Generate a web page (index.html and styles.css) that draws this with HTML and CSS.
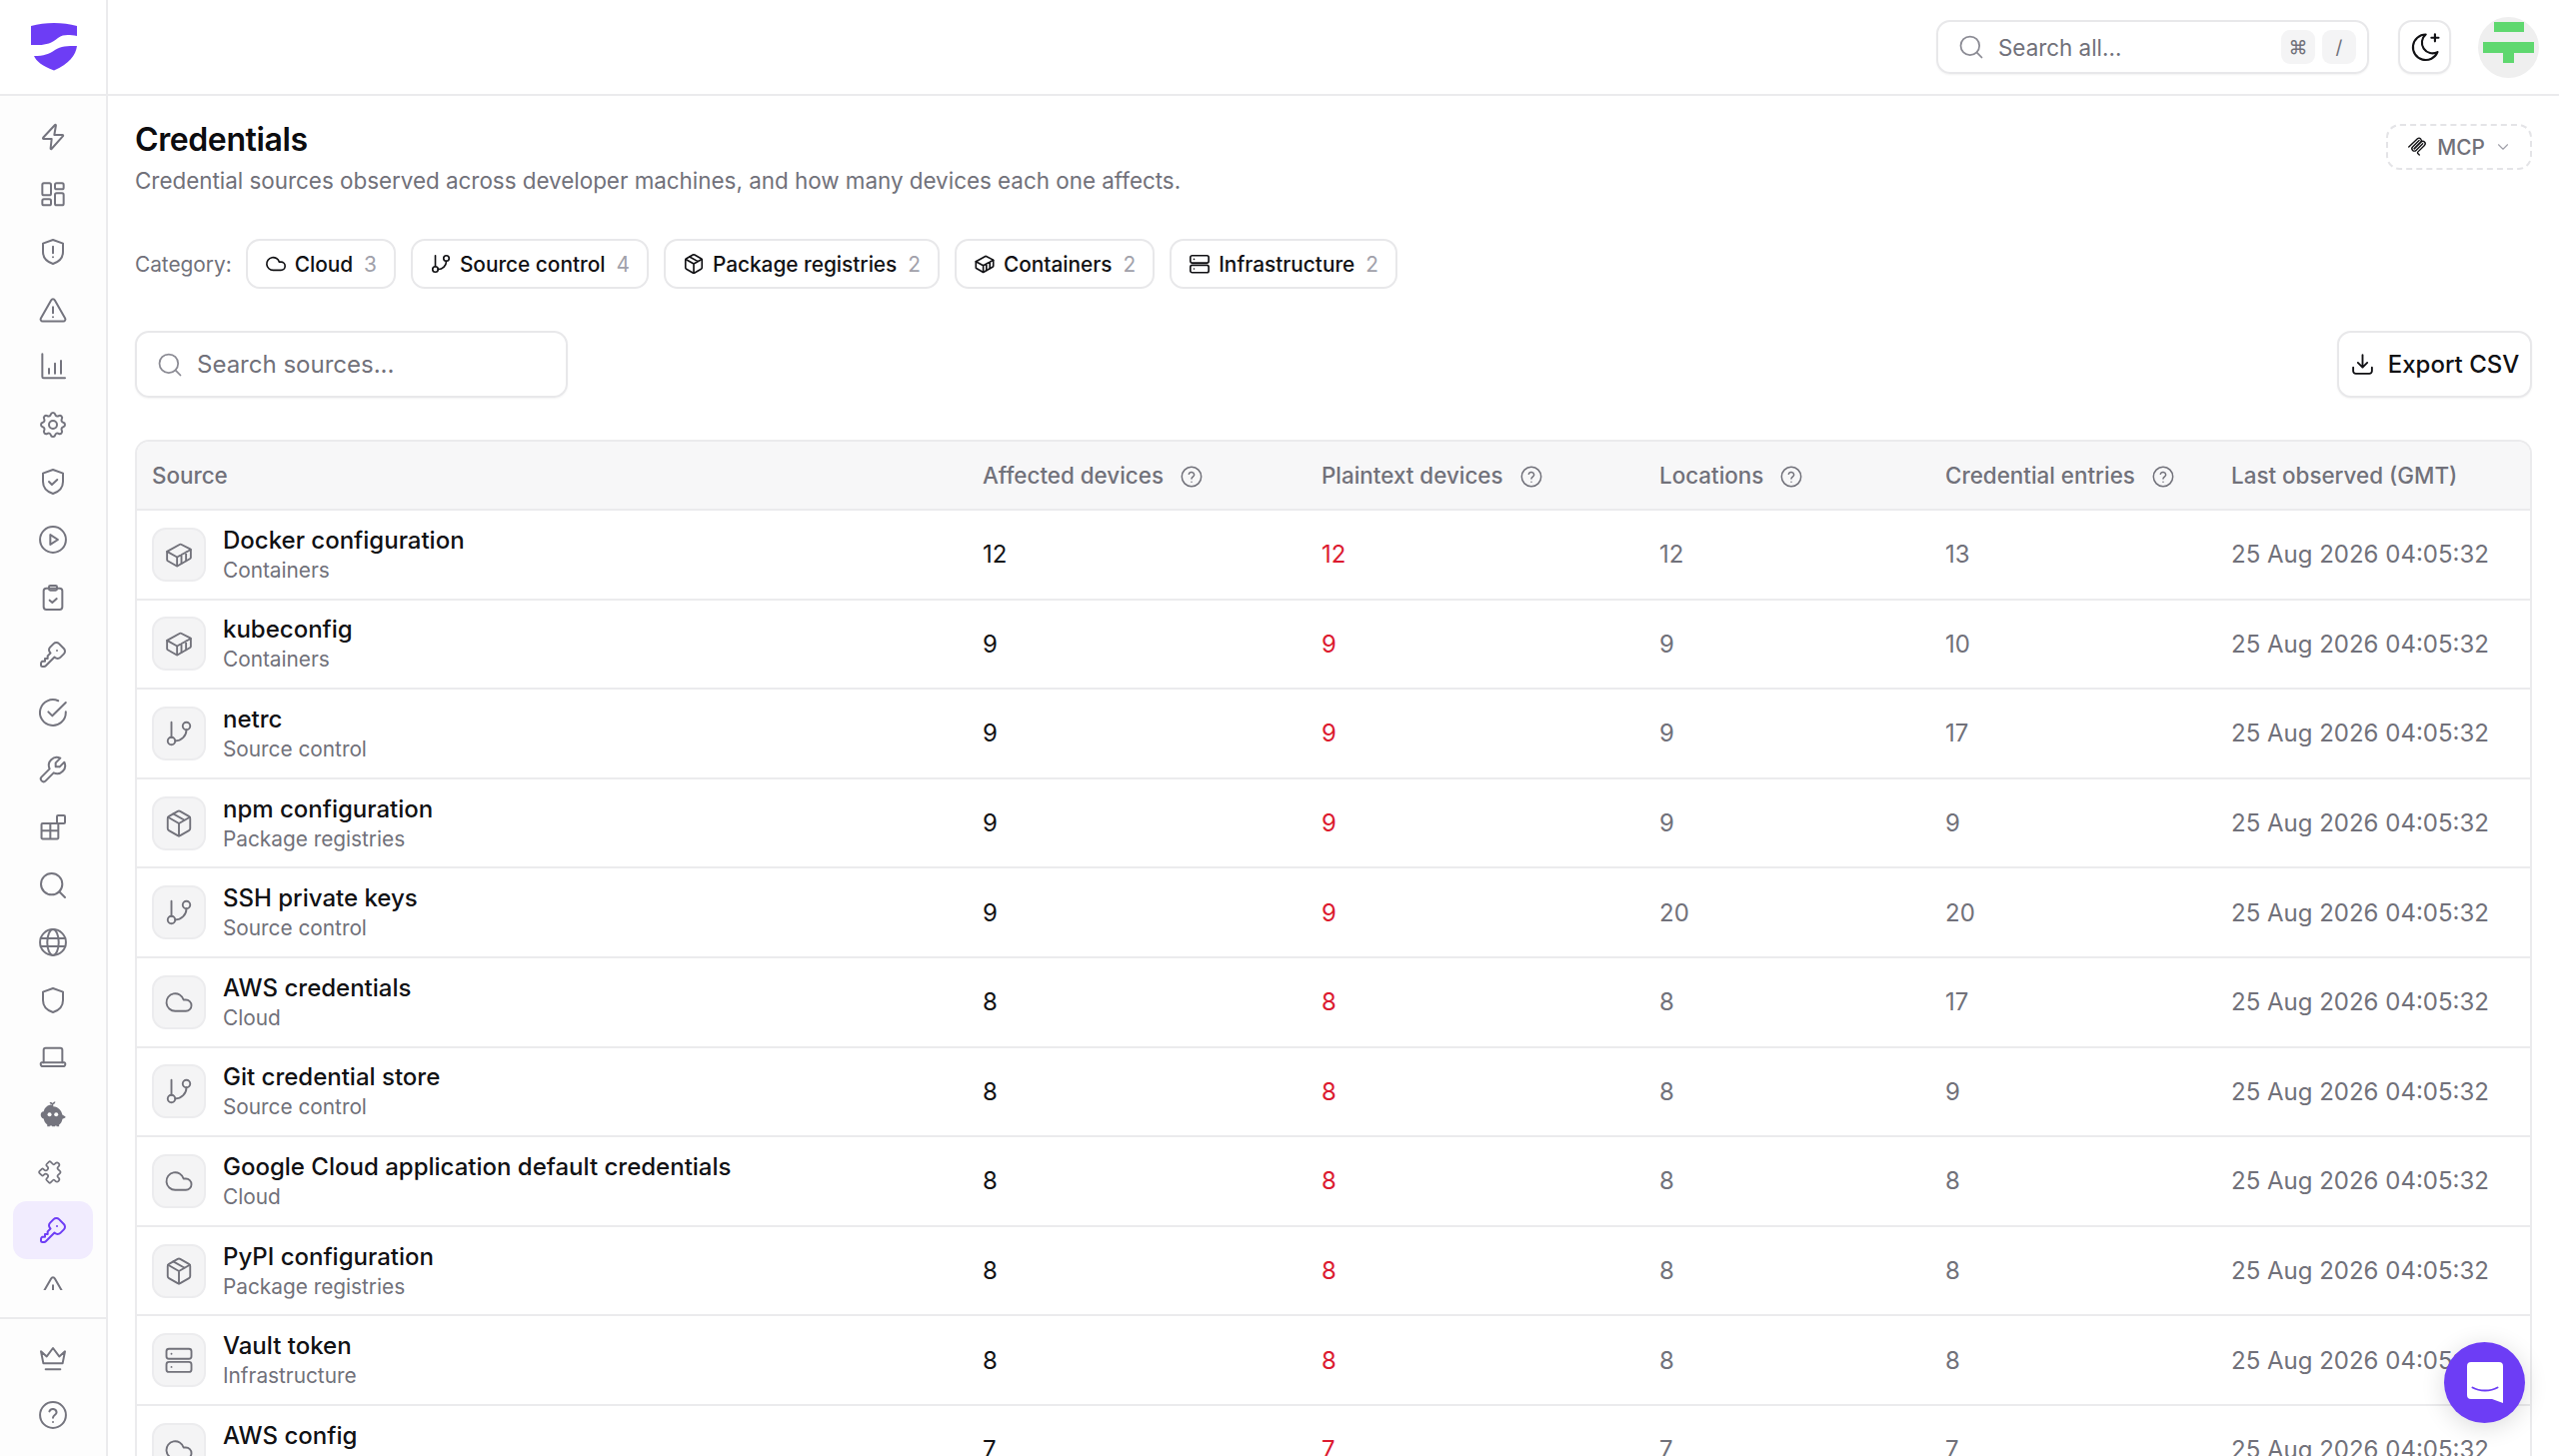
FILE: index.html
```html
<!DOCTYPE html>
<html lang="en">
<head>
<meta charset="UTF-8" />
<meta name="viewport" content="width=device-width, initial-scale=1" />
<title>Credentials</title>
<link rel="stylesheet" href="styles.css">
</head>
<body>

<!-- icon sprite -->
<svg class="sprite" aria-hidden="true">
  <symbol id="i-zap" viewBox="0 0 24 24"><path d="M13.5 3 4.6 12.6c-.3.4-.1.9.4.9H11l-.8 7.2c0 .4.4.6.7.3l8.6-9.6c.3-.4.1-.9-.4-.9H13l1.2-7.1c.1-.5-.4-.7-.7-.4z"/></symbol>
  <symbol id="i-dash" viewBox="0 0 24 24"><rect x="4" y="4" width="6.5" height="9" rx="1.2"/><rect x="4" y="16" width="6.5" height="4.5" rx="1.2"/><rect x="13.5" y="4" width="6.5" height="4.5" rx="1.2"/><rect x="13.5" y="11.5" width="6.5" height="9" rx="1.2"/></symbol>
  <symbol id="i-shield-alert" viewBox="0 0 24 24"><path d="M12 3l7.5 2.7v6.3c0 4.5-3.2 7.6-7.5 9-4.3-1.4-7.5-4.5-7.5-9V5.700z"/><path d="M12 8v5M12 16v.01"/></symbol>
  <symbol id="i-alert" viewBox="0 0 24 24"><path d="M10.6 4.800 2.900 18.300A1.600 1.600 0 0 0 4.300 20.700h15.400a1.600 1.600 0 0 0 1.400-2.400L13.400 4.800a1.600 1.600 0 0 0-2.800 0z"/><path d="M12 10v4.500M12 17.500v.01"/></symbol>
  <symbol id="i-chart" viewBox="0 0 24 24"><path d="M4 2.500V19.500a1 1 0 0 0 1 1h16"/><path d="M9 17v-3.500M13.500 17V9.500M18 17V7.500"/></symbol>
  <symbol id="i-gear" viewBox="0 0 24 24"><path d="M10.325 4.317c.426-1.756 2.924-1.756 3.350 0a1.724 1.724 0 0 0 2.573 1.066c1.543-.94 3.310.826 2.370 2.370a1.724 1.724 0 0 0 1.065 2.572c1.756.426 1.756 2.924 0 3.350a1.724 1.724 0 0 0-1.066 2.573c.94 1.543-.826 3.310-2.370 2.370a1.724 1.724 0 0 0-2.572 1.065c-.426 1.756-2.924 1.756-3.350 0a1.724 1.724 0 0 0-2.573-1.066c-1.543.94-3.310-.826-2.370-2.370a1.724 1.724 0 0 0-1.065-2.572c-1.756-.426-1.756-2.924 0-3.350a1.724 1.724 0 0 0 1.066-2.573c-.94-1.543.826-3.310 2.370-2.370 1 .608 2.296.07 2.572-1.065z"/><circle cx="12" cy="12" r="3"/></symbol>
  <symbol id="i-shield-check" viewBox="0 0 24 24"><path d="M12 3l7.500 2.700v6.300c0 4.500-3.200 7.600-7.500 9-4.300-1.400-7.500-4.500-7.500-9V5.700z"/><path d="M9 12l2.200 2.200L15.200 10.500"/></symbol>
  <symbol id="i-play" viewBox="0 0 24 24"><circle cx="12" cy="12" r="9.700"/><path d="M10 8.300v7.400l5.700-3.700z"/></symbol>
  <symbol id="i-clip" viewBox="0 0 24 24"><rect x="5" y="5" width="14" height="16" rx="2"/><rect x="9" y="3" width="6" height="3.500" rx="1"/><path d="M9.500 14l2 1.800 3.300-3"/></symbol>
  <symbol id="i-key" viewBox="0 0 24 24"><path d="M16.555 3.843l3.602 3.602a2.877 2.877 0 0 1 0 4.069l-2.643 2.643a2.877 2.877 0 0 1-4.069 0l-.301-.301l-6.558 6.558a2 2 0 0 1-1.239.578l-.175.008h-1.172a1 1 0 0 1-.993-.883l-.007-.117v-1.172a2 2 0 0 1 .467-1.284l.119-.13l.414-.414h2v-2h2v-2l2.144-2.144l-.301-.301a2.877 2.877 0 0 1 0-4.069l2.643-2.643a2.877 2.877 0 0 1 4.069 0z" transform="rotate(0)"/><path d="M15 9h.01"/></symbol>
  <symbol id="i-check-circle" viewBox="0 0 24 24"><path d="M21.600 11.500V12a9.700 9.700 0 1 1-5.700-8.800"/><path d="M8.500 11.500l3 3L21.600 4.500"/></symbol>
  <symbol id="i-wrench" viewBox="0 0 24 24"><g transform="translate(24 0) scale(-1 1)"><path d="M7 10h3V7L6.500 3.500a6 6 0 0 1 8 8l6 6a2 2 0 0 1-3 3l-6-6a6 6 0 0 1-8-8L7 10"/></g></symbol>
  <symbol id="i-apps" viewBox="0 0 24 24"><rect x="15" y="3" width="6" height="6" rx=".8"/><path d="M4.200 9H10v5.500h6V19.800a.8.8 0 0 1-.8.8H4.200a.8.8 0 0 1-.8-.8V9.800a.8.8 0 0 1 .8-.8zM3.400 14.500H10M10 14.500v6M10 9h5.200a.8.8 0 0 1 .8.8v4.700"/></symbol>
  <symbol id="i-search" viewBox="0 0 24 24"><circle cx="11" cy="11" r="8"/><path d="M21 21l-4.300-4.300"/></symbol>
  <symbol id="i-globe" viewBox="0 0 24 24"><circle cx="12" cy="12" r="9.700"/><ellipse cx="12" cy="12" rx="4.300" ry="9.700"/><path d="M2.800 9h18.400M2.800 15h18.400"/></symbol>
  <symbol id="i-shield" viewBox="0 0 24 24"><path d="M12 3l7.500 2.700v6.300c0 4.500-3.200 7.600-7.500 9-4.300-1.400-7.500-4.500-7.500-9V5.700z"/></symbol>
  <symbol id="i-laptop" viewBox="0 0 24 24"><path d="M5 16V6.500A1.500 1.500 0 0 1 6.500 5h11A1.500 1.500 0 0 1 19 6.500V16"/><path d="M3.500 16h17a.7.7 0 0 1 .7.7v.6a1.500 1.500 0 0 1-1.500 1.500H4.300a1.500 1.500 0 0 1-1.500-1.500v-.6a.7.7 0 0 1 .7-.7z"/></symbol>
  <symbol id="i-puzzle" viewBox="0 0 24 24"><g transform="rotate(45 12 12) translate(1.800 1.800) scale(.85)"><path d="M4 7h3a1 1 0 0 0 1-1v-1a2 2 0 0 1 4 0v1a1 1 0 0 0 1 1h3a1 1 0 0 1 1 1v3a1 1 0 0 0 1 1h1a2 2 0 0 1 0 4h-1a1 1 0 0 0-1 1v3a1 1 0 0 1-1 1h-3a1 1 0 0 1-1-1v-1a2 2 0 0 0-4 0v1a1 1 0 0 1-1 1H4a1 1 0 0 1-1-1v-3a1 1 0 0 1 1-1h1a2 2 0 0 0 0-4H4a1 1 0 0 1-1-1V8a1 1 0 0 1 1-1"/></g></symbol>
  <symbol id="i-crown" viewBox="0 0 24 24"><path d="M3 7l4.300 3.800L12 4.500l4.700 6.300L21 7l-1.800 9H4.800z"/><path d="M6.500 20.500h11"/></symbol>
  <symbol id="i-help" viewBox="0 0 24 24"><circle cx="12" cy="12" r="9.700"/><path d="M9.300 9.300a2.800 2.800 0 0 1 5.400 .7c0 1.900-2.700 2.200-2.700 4"/><path d="M12 17.200v.01"/></symbol>
  <symbol id="i-cloud" viewBox="0 0 24 24"><path d="M17.500 19H9a7 7 0 1 1 6.710-9h1.790a4.500 4.500 0 1 1 0 9z"/></symbol>
  <symbol id="i-branch" viewBox="0 0 24 24"><path d="M6 3v12"/><circle cx="6" cy="18" r="3"/><circle cx="18" cy="6" r="3"/><path d="M18 9a9 9 0 0 1-9 9"/></symbol>
  <symbol id="i-package" viewBox="0 0 24 24"><path d="M21 8a2 2 0 0 0-1-1.730l-7-4a2 2 0 0 0-2 0l-7 4A2 2 0 0 0 3 8v8a2 2 0 0 0 1 1.730l7 4a2 2 0 0 0 2 0l7-4A2 2 0 0 0 21 16z"/><path d="M12 22V12M3.300 7l8.700 5 8.700-5M7.500 4.270l9 5.150"/></symbol>
  <symbol id="i-container" viewBox="0 0 24 24"><path d="M2.500 9.500 12.800 3.800a1 1 0 0 1 .9 0l7.300 3.700a1 1 0 0 1 .5.9v6a1 1 0 0 1-.5.8l-10 5.800a1 1 0 0 1-1 0l-7-4a1 1 0 0 1-.5-.9z"/><path d="M2.500 9.500l8 4.500L21.500 8M10.500 14v7M14 12.200v6.800M17.700 10v7"/></symbol>
  <symbol id="i-server" viewBox="0 0 24 24"><rect x="2" y="3" width="20" height="8" rx="2"/><rect x="2" y="13.500" width="20" height="8" rx="2"/><path d="M6 7h.01M6 17.500h.01"/></symbol>
  <symbol id="i-download" viewBox="0 0 24 24"><path d="M12 3v12M7.500 10.500 12 15l4.500-4.500"/><path d="M3 15v3.500A2.500 2.500 0 0 0 5.500 21h13a2.500 2.500 0 0 0 2.500-2.500V15"/></symbol>
  <symbol id="i-moon" viewBox="0 0 24 24"><path d="M12.500 3.200a9 9 0 1 0 8.300 12.400 7.500 7.500 0 0 1-8.300-12.400z"/><path d="M19 3v5M16.500 5.500h5"/></symbol>
  <symbol id="i-mcp" viewBox="0 0 24 24"><path d="M3 12 12.500 3a2.600 2.600 0 0 1 3.700 3.600L9 13.800"/><path d="M9 13.800 16.400 6.600a2.600 2.600 0 0 1 3.700 3.700l-7.300 7.300a1 1 0 0 0 0 1.400l1.700 1.700"/><path d="M14.300 4.800 7.200 12a2.600 2.600 0 0 0 3.700 3.700l7.300-7.300"/></symbol>
  <symbol id="i-chevron" viewBox="0 0 24 24"><path d="M6 9l6 6 6-6"/></symbol>
</svg>

<div class="app">

  <header class="topbar">
    <a class="logo-box" href="#" aria-label="Home">
      <svg class="logo" viewBox="0 0 46 48">
        <path d="M0 3C14 -1 32 -1 46 3V13C38 12 33 11 27 15C21 20 15 22 8 22H0Z"/>
        <path d="M46 23C45 32 38 41 23 47.500C11 43 5 38 3 33C13 33 18 31 24 27C30 23 36 23 46 23Z"/>
      </svg>
    </a>
    <div class="topbar-right">
      <label class="global-search">
        <svg class="ico search-ico"><use href="#i-search"/></svg>
        <input type="text" placeholder="Search all..." />
        <span class="kbd">⌘</span>
        <span class="kbd">/</span>
      </label>
      <button class="theme-btn" aria-label="Toggle theme"><svg class="ico"><use href="#i-moon"/></svg></button>
      <div class="avatar">
        <span class="av av-top"></span>
        <span class="av av-mid"></span>
        <span class="av av-low"></span>
      </div>
    </div>
  </header>

  <aside class="sidebar">
    <nav class="side-nav">
      <a class="side-item" href="#"><svg class="ico"><use href="#i-zap"/></svg></a>
      <a class="side-item" href="#"><svg class="ico"><use href="#i-dash"/></svg></a>
      <a class="side-item" href="#"><svg class="ico"><use href="#i-shield-alert"/></svg></a>
      <a class="side-item" href="#"><svg class="ico"><use href="#i-alert"/></svg></a>
      <a class="side-item" href="#"><svg class="ico"><use href="#i-chart"/></svg></a>
      <a class="side-item" href="#"><svg class="ico"><use href="#i-gear"/></svg></a>
      <a class="side-item" href="#"><svg class="ico"><use href="#i-shield-check"/></svg></a>
      <a class="side-item" href="#"><svg class="ico"><use href="#i-play"/></svg></a>
      <a class="side-item" href="#"><svg class="ico"><use href="#i-clip"/></svg></a>
      <a class="side-item" href="#"><svg class="ico"><use href="#i-key"/></svg></a>
      <a class="side-item" href="#"><svg class="ico"><use href="#i-check-circle"/></svg></a>
      <a class="side-item" href="#"><svg class="ico"><use href="#i-wrench"/></svg></a>
      <a class="side-item" href="#"><svg class="ico"><use href="#i-apps"/></svg></a>
      <a class="side-item" href="#"><svg class="ico"><use href="#i-search"/></svg></a>
      <a class="side-item" href="#"><svg class="ico"><use href="#i-globe"/></svg></a>
      <a class="side-item" href="#"><svg class="ico"><use href="#i-shield"/></svg></a>
      <a class="side-item" href="#"><svg class="ico"><use href="#i-laptop"/></svg></a>
      <a class="side-item" href="#">
        <svg class="ico ico-solid" viewBox="0 0 24 24">
          <path d="M11.300 5.500V3.800C10.200 3.800 9.600 3.200 9.500 2.400c1-.3 1.800 0 2.300.6.300-.8 1-1.300 2-1.200 0 .9-.6 1.700-1.600 1.900v1.800c3.800.3 6.300 3 6.800 6.200l2.200 1.300c.3.200.3.600 0 .8l-2.100 1c-.3 2-1.200 3.400-2.500 4.300v1.300h-1.900v-.5h-1.100v.6h-2.300v-.6H9.600v.5H7.700v-1.300c-1.400-.9-2.400-2.400-2.700-4.400-1.400-.5-2.200-1.600-2.200-3.100 0-1.400.9-2.300 2.200-2.400.6-3 3-5.100 6.300-5.300z"/>
          <circle class="eye" cx="9.400" cy="11.500" r="1.500"/>
          <circle class="eye" cx="14.400" cy="11.500" r="1.500"/>
        </svg>
      </a>
      <a class="side-item" href="#"><svg class="ico"><use href="#i-puzzle"/></svg></a>
      <a class="side-item active" href="#"><svg class="ico"><use href="#i-key"/></svg></a>
      <a class="side-item" href="#"><svg class="ico"><use href="#i-alert"/></svg></a>
    </nav>
    <div class="side-footer">
      <a class="side-item" href="#"><svg class="ico"><use href="#i-crown"/></svg></a>
      <a class="side-item" href="#"><svg class="ico"><use href="#i-help"/></svg></a>
    </div>
  </aside>

  <main class="main">
    <div class="page-head">
      <div>
        <h1>Credentials</h1>
        <p class="subtitle">Credential sources observed across developer machines, and how many devices each one affects.</p>
      </div>
      <button class="mcp-btn">
        <svg class="ico mcp-ico"><use href="#i-mcp"/></svg>
        MCP
        <svg class="ico chev-ico"><use href="#i-chevron"/></svg>
      </button>
    </div>

    <div class="filters">
      <span class="filter-label">Category:</span>
      <button class="chip"><svg class="ico"><use href="#i-cloud"/></svg>Cloud <span class="chip-count">3</span></button>
      <button class="chip"><svg class="ico"><use href="#i-branch"/></svg>Source control <span class="chip-count">4</span></button>
      <button class="chip"><svg class="ico"><use href="#i-package"/></svg>Package registries <span class="chip-count">2</span></button>
      <button class="chip"><svg class="ico"><use href="#i-container"/></svg>Containers <span class="chip-count">2</span></button>
      <button class="chip"><svg class="ico"><use href="#i-server"/></svg>Infrastructure <span class="chip-count">2</span></button>
    </div>

    <div class="toolbar">
      <label class="source-search">
        <svg class="ico search-ico"><use href="#i-search"/></svg>
        <input type="text" placeholder="Search sources..." />
      </label>
      <button class="export-btn"><svg class="ico"><use href="#i-download"/></svg>Export CSV</button>
    </div>

    <div class="table-wrap">
      <table class="sources">
        <colgroup>
          <col class="c-source"><col class="c-affected"><col class="c-plain"><col class="c-loc"><col class="c-entries"><col class="c-last">
        </colgroup>
        <thead>
          <tr>
            <th>Source</th>
            <th>Affected devices <svg class="ico help-ico"><use href="#i-help"/></svg></th>
            <th>Plaintext devices <svg class="ico help-ico"><use href="#i-help"/></svg></th>
            <th>Locations <svg class="ico help-ico"><use href="#i-help"/></svg></th>
            <th>Credential entries <svg class="ico help-ico"><use href="#i-help"/></svg></th>
            <th>Last observed (GMT)</th>
          </tr>
        </thead>
        <tbody>
          <tr>
            <td><div class="source"><span class="source-ico"><svg class="ico"><use href="#i-container"/></svg></span><div><div class="source-name">Docker configuration</div><div class="source-cat">Containers</div></div></div></td>
            <td class="num">12</td><td class="num red">12</td><td class="muted">12</td><td class="muted">13</td><td class="muted">25 Aug 2026 04:05:32</td>
          </tr>
          <tr>
            <td><div class="source"><span class="source-ico"><svg class="ico"><use href="#i-container"/></svg></span><div><div class="source-name">kubeconfig</div><div class="source-cat">Containers</div></div></div></td>
            <td class="num">9</td><td class="num red">9</td><td class="muted">9</td><td class="muted">10</td><td class="muted">25 Aug 2026 04:05:32</td>
          </tr>
          <tr>
            <td><div class="source"><span class="source-ico"><svg class="ico"><use href="#i-branch"/></svg></span><div><div class="source-name">netrc</div><div class="source-cat">Source control</div></div></div></td>
            <td class="num">9</td><td class="num red">9</td><td class="muted">9</td><td class="muted">17</td><td class="muted">25 Aug 2026 04:05:32</td>
          </tr>
          <tr>
            <td><div class="source"><span class="source-ico"><svg class="ico"><use href="#i-package"/></svg></span><div><div class="source-name">npm configuration</div><div class="source-cat">Package registries</div></div></div></td>
            <td class="num">9</td><td class="num red">9</td><td class="muted">9</td><td class="muted">9</td><td class="muted">25 Aug 2026 04:05:32</td>
          </tr>
          <tr>
            <td><div class="source"><span class="source-ico"><svg class="ico"><use href="#i-branch"/></svg></span><div><div class="source-name">SSH private keys</div><div class="source-cat">Source control</div></div></div></td>
            <td class="num">9</td><td class="num red">9</td><td class="muted">20</td><td class="muted">20</td><td class="muted">25 Aug 2026 04:05:32</td>
          </tr>
          <tr>
            <td><div class="source"><span class="source-ico"><svg class="ico"><use href="#i-cloud"/></svg></span><div><div class="source-name">AWS credentials</div><div class="source-cat">Cloud</div></div></div></td>
            <td class="num">8</td><td class="num red">8</td><td class="muted">8</td><td class="muted">17</td><td class="muted">25 Aug 2026 04:05:32</td>
          </tr>
          <tr>
            <td><div class="source"><span class="source-ico"><svg class="ico"><use href="#i-branch"/></svg></span><div><div class="source-name">Git credential store</div><div class="source-cat">Source control</div></div></div></td>
            <td class="num">8</td><td class="num red">8</td><td class="muted">8</td><td class="muted">9</td><td class="muted">25 Aug 2026 04:05:32</td>
          </tr>
          <tr>
            <td><div class="source"><span class="source-ico"><svg class="ico"><use href="#i-cloud"/></svg></span><div><div class="source-name">Google Cloud application default credentials</div><div class="source-cat">Cloud</div></div></div></td>
            <td class="num">8</td><td class="num red">8</td><td class="muted">8</td><td class="muted">8</td><td class="muted">25 Aug 2026 04:05:32</td>
          </tr>
          <tr>
            <td><div class="source"><span class="source-ico"><svg class="ico"><use href="#i-package"/></svg></span><div><div class="source-name">PyPI configuration</div><div class="source-cat">Package registries</div></div></div></td>
            <td class="num">8</td><td class="num red">8</td><td class="muted">8</td><td class="muted">8</td><td class="muted">25 Aug 2026 04:05:32</td>
          </tr>
          <tr>
            <td><div class="source"><span class="source-ico"><svg class="ico"><use href="#i-server"/></svg></span><div><div class="source-name">Vault token</div><div class="source-cat">Infrastructure</div></div></div></td>
            <td class="num">8</td><td class="num red">8</td><td class="muted">8</td><td class="muted">8</td><td class="muted">25 Aug 2026 04:05:32</td>
          </tr>
          <tr>
            <td><div class="source"><span class="source-ico"><svg class="ico"><use href="#i-cloud"/></svg></span><div><div class="source-name">AWS config</div><div class="source-cat">Cloud</div></div></div></td>
            <td class="num">7</td><td class="num red">7</td><td class="muted">7</td><td class="muted">7</td><td class="muted">25 Aug 2026 04:05:32</td>
          </tr>
        </tbody>
      </table>
    </div>
  </main>

</div>

<button class="chat-fab" aria-label="Open chat">
  <svg viewBox="0 0 36 41">
    <path d="M4 0h28a4 4 0 0 1 4 4v37l-11-4H4a4 4 0 0 1-4-4V4a4 4 0 0 1 4-4z"/>
    <path class="smile" d="M5.500 25.500c7 4 18 4 25 0"/>
  </svg>
</button>

</body>
</html>
```

FILE: styles.css
```css
/* Reset & base */
* {
  box-sizing: border-box;
}
html, body {
  height: 100%;
}
body {
  margin: 0;
  overflow: hidden;
  font-family: Inter, 'Noto Sans', sans-serif;
  color: #111114;
  background: #fff;
}
button, input {
  font-family: inherit;
}
button {
  cursor: pointer;
}
.sprite {
  display: none;
}
.ico {
  width: 32px;
  height: 32px;
  fill: none;
  stroke: currentColor;
  stroke-width: 1.5;
  stroke-linecap: round;
  stroke-linejoin: round;
  flex: none;
}

/* Layout */
.app {
  display: grid;
  grid-template-columns: 108px 1fr;
  grid-template-rows: 96px 1fr;
  height: 1457px;
}

/* Top bar */
.topbar {
  grid-column: 1 / 3;
  display: flex;
  align-items: center;
  justify-content: flex-end;
  position: relative;
  border-bottom: 2px solid #ebebed;
  padding-right: 20px;
}
.logo-box {
  width: 108px;
  height: 94px;
  margin-right: auto;
  border-right: 2px solid #ebebed;
  display: flex;
  justify-content: center;
  padding: 23px 0 0 1px;
}
.logo {
  width: 46px;
  height: 48px;
  fill: #6d3df5;
}
.topbar-right {
  display: flex;
  align-items: center;
}
.global-search {
  width: 433px;
  height: 54px;
  display: flex;
  align-items: center;
  gap: 7px;
  padding: 0 11px 0 19px;
  border: 2px solid #e8e8ea;
  border-radius: 14px;
  box-shadow: 0 1px 2px rgba(0,0,0,0.05);
}
.global-search .search-ico {
  width: 28px;
  height: 28px;
  color: #8b8b94;
  margin-right: 6px;
}
.global-search input {
  flex: 1;
  min-width: 0;
  border: none;
  outline: none;
  padding: 0;
  font-size: 22.4px;
}
.global-search input::placeholder {
  color: #71717a;
  opacity: 1;
}
.kbd {
  width: 34px;
  height: 34px;
  display: flex;
  align-items: center;
  justify-content: center;
  background: #f4f4f5;
  border-radius: 9px;
  font-size: 19px;
  color: #71717a;
}
.theme-btn {
  width: 53px;
  height: 54px;
  margin-left: 29px;
  padding: 0;
  display: flex;
  align-items: center;
  justify-content: center;
  background: #fff;
  border: 2px solid #e8e8ea;
  border-radius: 14px;
  box-shadow: 0 1px 2px rgba(0,0,0,0.05);
  color: #111114;
}
.theme-btn .ico {
  width: 34px;
  height: 34px;
}
.avatar {
  width: 61px;
  height: 61px;
  margin-left: 27px;
  border-radius: 50%;
  background: #efefef;
  display: flex;
  flex-direction: column;
  align-items: center;
  padding-top: 5px;
}
.av {
  display: block;
  background: #5fd86f;
}
.av-top {
  width: 30px;
  height: 10px;
  margin-bottom: 10px;
}
.av-mid {
  width: 51px;
  height: 11px;
}
.av-low {
  width: 11px;
  height: 10px;
}

/* Sidebar */
.sidebar {
  display: flex;
  flex-direction: column;
  min-height: 0;
  border-right: 2px solid #ebebed;
  background: #fdfdfd;
}
.side-nav {
  height: 1195px;
  padding: 12px 0 0;
  overflow: hidden;
  flex: none;
}
.side-item {
  display: flex;
  align-items: center;
  justify-content: center;
  height: 57.6px;
  margin: 0 13px;
  color: #74747e;
  border-radius: 14px;
}
.side-item.active {
  background: #f1ecfe;
  color: #6d3df5;
}
.ico-solid {
  fill: currentColor;
  stroke: none;
}
.ico-solid .eye {
  fill: #fdfdfd;
}
.side-footer {
  margin-top: 27px;
  border-top: 2px solid #ebebed;
  padding-top: 10px;
}

/* Main */
.main {
  min-width: 0;
  overflow: hidden;
  padding: 24px 27px 0;
}
.page-head {
  display: flex;
  justify-content: space-between;
  align-items: flex-start;
}
h1 {
  margin: 0;
  font-size: 32px;
  line-height: 40px;
  font-weight: 600;
  letter-spacing: -0.4px;
  color: #0c0c0f;
}
.subtitle {
  margin: 5px 0 0;
  font-size: 22.4px;
  line-height: 32px;
  color: #71717a;
}
.mcp-btn {
  width: 146px;
  height: 46px;
  margin-top: 4px;
  display: flex;
  align-items: center;
  justify-content: center;
  gap: 9px;
  padding: 0;
  background: #fff;
  border: 2px dashed #e4e4e7;
  border-radius: 14px;
  font-size: 20.8px;
  font-weight: 500;
  color: #71717a;
}
.mcp-ico {
  width: 22px;
  height: 22px;
  color: #111114;
}
.chev-ico {
  width: 18px;
  height: 18px;
  color: #a1a1aa;
}

/* Category filter */
.filters {
  display: flex;
  align-items: center;
  margin-top: 42px;
  gap: 15px;
}
.filter-label {
  font-size: 20.8px;
  color: #71717a;
  margin-right: -1px;
}
.chip {
  height: 50px;
  display: flex;
  align-items: center;
  gap: 8px;
  padding: 0 17px;
  background: #fff;
  border: 2px solid #e8e8ea;
  border-radius: 14px;
  font-size: 20.8px;
  font-weight: 500;
  color: #111114;
}
.chip .ico {
  width: 22px;
  height: 22px;
  stroke-width: 1.8;
}
.chip-count {
  margin-left: 3px;
  color: #a1a1aa;
  font-weight: 400;
}

/* Toolbar */
.toolbar {
  display: flex;
  justify-content: space-between;
  align-items: center;
  margin-top: 42px;
}
.source-search {
  width: 433px;
  height: 67px;
  display: flex;
  align-items: center;
  gap: 13px;
  padding: 0 19px;
  border: 2px solid #e8e8ea;
  border-radius: 14px;
  box-shadow: 0 1px 2px rgba(0,0,0,0.05);
}
.source-search .search-ico {
  width: 28px;
  height: 28px;
  color: #8b8b94;
}
.source-search input {
  flex: 1;
  min-width: 0;
  border: none;
  outline: none;
  padding: 0;
  font-size: 24px;
}
.source-search input::placeholder {
  color: #71717a;
  opacity: 1;
}
.export-btn {
  width: 195px;
  height: 67px;
  display: flex;
  align-items: center;
  justify-content: center;
  gap: 13px;
  padding: 0;
  background: #fff;
  border: 2px solid #e8e8ea;
  border-radius: 14px;
  box-shadow: 0 1px 2px rgba(0,0,0,0.05);
  font-size: 24px;
  font-weight: 500;
  color: #111114;
}
.export-btn .ico {
  width: 25px;
  height: 25px;
  stroke-width: 1.8;
}

/* Table */
.table-wrap {
  margin-top: 42px;
  border: 2px solid #ebebed;
  border-bottom: none;
  border-radius: 14px 14px 0 0;
  overflow: hidden;
}
.sources {
  width: 100%;
  table-layout: fixed;
  border-collapse: separate;
  border-spacing: 0;
}
.c-source { width: 831px; }
.c-affected { width: 339px; }
.c-plain { width: 338px; }
.c-loc { width: 286px; }
.c-entries { width: 286px; }
.sources th {
  height: 69px;
  padding: 0 0 0 15px;
  text-align: left;
  vertical-align: middle;
  font-size: 22.4px;
  font-weight: 500;
  color: #71717a;
  background: #f7f7f8;
  border-bottom: 2px solid #ebebed;
  white-space: nowrap;
}
.help-ico {
  width: 24px;
  height: 24px;
  margin-left: 10px;
  vertical-align: -5px;
}
.sources td {
  height: 89.6px;
  padding: 0 0 0 15px;
  font-size: 24px;
  border-bottom: 2px solid #ebebed;
  white-space: nowrap;
}
.num {
  color: #111114;
}
.red {
  color: #dc1a30;
}
.muted {
  color: #71717a;
}
.source {
  display: flex;
  align-items: center;
  gap: 17px;
}
.source-ico {
  width: 54px;
  height: 54px;
  display: flex;
  align-items: center;
  justify-content: center;
  background: #f4f4f5;
  border: 2px solid #ececee;
  border-radius: 14px;
  color: #71717a;
  flex: none;
}
.source-ico .ico {
  width: 30px;
  height: 30px;
}
.source-name {
  font-size: 24px;
  line-height: 32px;
  font-weight: 500;
  color: #111114;
}
.source-cat {
  font-size: 20.8px;
  line-height: 28px;
  color: #71717a;
}

/* Chat launcher */
.chat-fab {
  position: fixed;
  right: 34px;
  bottom: 33px;
  width: 81px;
  height: 81px;
  padding: 0;
  display: flex;
  align-items: center;
  justify-content: center;
  background: #6d3df5;
  border: none;
  border-radius: 50%;
  box-shadow: 0 4px 24px rgba(0,0,0,0.14);
}
.chat-fab svg {
  width: 36px;
  height: 41px;
  fill: #fff;
}
.chat-fab .smile {
  fill: none;
  stroke: #6d3df5;
  stroke-width: 2;
  stroke-linecap: round;
}
```
